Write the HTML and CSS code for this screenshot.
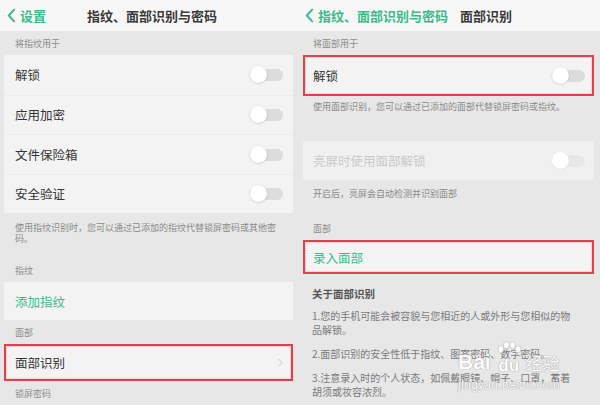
FILE: index.html
```html
<!DOCTYPE html>
<html lang="zh-CN">
<head>
<meta charset="utf-8">
<link rel="stylesheet" href="styles.css">
</head>
<body>
<div class="stage">
  <section class="screen screen-left">
    <header class="bar bar-centered">
      <span class="back"><svg class="chev-back" viewBox="0 0 10 16" width="9" height="15"><polyline points="8,1.5 2,8 8,14.5" fill="none" stroke="currentColor" stroke-width="2.2" stroke-linecap="round" stroke-linejoin="round"/></svg>设置</span>
      <span class="title">指纹、面部识别与密码</span>
      <span></span>
    </header>
    <div class="label">将指纹用于</div>
    <div class="card">
      <div class="row"><span>解锁</span><i class="switch"></i></div>
      <div class="row"><span>应用加密</span><i class="switch"></i></div>
      <div class="row"><span>文件保险箱</span><i class="switch"></i></div>
      <div class="row"><span>安全验证</span><i class="switch"></i></div>
    </div>
    <p class="note note-left">使用指纹识别时，您可以通过已添加的指纹代替锁屏密码或其他密码。</p>
    <div class="label">指纹</div>
    <div class="card">
      <div class="row row-single green">添加指纹</div>
    </div>
    <div class="label">面部</div>
    <div class="card marked">
      <div class="row row-face"><span>面部识别</span><svg class="chev-go" viewBox="0 0 6 10" width="5" height="9"><polyline points="1,1 5,5 1,9" fill="none" stroke="#c4c4c4" stroke-width="1.2"/></svg></div>
    </div>
    <div class="label">锁屏密码</div>
  </section>

  <section class="screen screen-right">
    <header class="bar bar-flow">
      <span class="back"><svg class="chev-back" viewBox="0 0 10 16" width="9" height="15"><polyline points="8,1.5 2,8 8,14.5" fill="none" stroke="currentColor" stroke-width="2.2" stroke-linecap="round" stroke-linejoin="round"/></svg>指纹、面部识别与密码</span>
      <span class="title">面部识别</span>
    </header>
    <div class="label">将面部用于</div>
    <div class="card marked">
      <div class="row row-unlock"><span>解锁</span><i class="switch"></i></div>
    </div>
    <p class="note note-r1">使用面部识别，您可以通过已添加的面部代替锁屏密码或指纹。</p>
    <div class="card card-dim">
      <div class="row row-dim"><span>亮屏时使用面部解锁</span><i class="switch switch-dim"></i></div>
    </div>
    <p class="note note-r2">开启后，亮屏会自动检测并识别面部</p>
    <div class="label">面部</div>
    <div class="card marked">
      <div class="row row-enroll green">录入面部</div>
    </div>
    <h3 class="about">关于面部识别</h3>
    <p class="para">1.您的手机可能会被容貌与您相近的人或外形与您相似的物品解锁。</p>
    <p class="para">2.面部识别的安全性低于指纹、图案密码、数字密码。</p>
    <p class="para">3.注意录入时的个人状态，如佩戴眼镜、帽子、口罩，蓄着胡须或妆容浓烈。</p>
  </section>

  <div class="watermark" aria-hidden="true">
    <div class="wm-top">
      <span class="wm-bai">Bai</span>
      <span class="wm-paw">
        <svg viewBox="0 0 30 22" width="28" height="20">
          <g fill="#ffffff" stroke="#bdbdbd" stroke-width="0.8">
            <ellipse cx="6" cy="9" rx="3.2" ry="4"/>
            <ellipse cx="12" cy="4.5" rx="3.2" ry="4"/>
            <ellipse cx="19" cy="4.5" rx="3.2" ry="4"/>
            <ellipse cx="25" cy="9" rx="3.2" ry="4"/>
          </g>
        </svg>
        <span class="wm-du">du</span>
      </span>
      <span class="wm-jy">经验</span>
    </div>
    <div class="wm-url">jingyan.baidu.com</div>
  </div>
</div>
</body>
</html>
```

FILE: styles.css
```css
* { box-sizing: border-box; }

html, body {
  margin: 0;
  padding: 0;
  background: #ffffff;
}

body {
  font-family: "Noto Sans CJK SC", "Noto Sans", "Liberation Sans", sans-serif;
  color: #333333;
}

.stage {
  position: relative;
  width: 600px;
  height: 405px;
  overflow: hidden;
  display: flex;
  gap: 3px;
  background: linear-gradient(#f7f7f7 0, #f7f7f7 31px, #e7e7e7 31px);
  padding-right: 3px;
}

.screen {
  width: 297px;
  height: 405px;
  background: #e7e7e7;
  display: flex;
  flex-direction: column;
  overflow: hidden;
}

.bar {
  height: 31px;
  flex: none;
  background: #f7f7f7;
  align-items: center;
  font-size: 13px;
}

.bar-centered {
  display: grid;
  grid-template-columns: 1fr auto 1fr;
  padding-left: 7px;
}

.bar-flow {
  display: flex;
  gap: 12px;
  padding-left: 5px;
}

.back {
  display: flex;
  align-items: center;
  gap: 4px;
  color: #3fb98c;
  font-size: 13px;
  font-weight: 700;
}

.chev-back { color: #3fb98c; flex: none; }

.title {
  color: #3a3a3a;
  font-weight: 700;
}

.label {
  flex: none;
  font-size: 9px;
  line-height: 12px;
  height: 24px;
  padding: 7px 15px 5px;
  color: #8c8c8c;
}

.screen-right .label { padding-left: 13px; }

.card {
  flex: none;
  background: #f3f3f3;
  margin: 0 4px;
}

.screen-right .card { margin: 0 3px 0 3px; }

.card.marked {
  outline: 2px solid #e3404e;
  outline-offset: -2px;
  box-shadow: inset 0 0 0 3px rgba(240, 150, 160, 0.35);
}

.row {
  height: 39.5px;
  display: flex;
  align-items: center;
  justify-content: space-between;
  padding: 0 9px 0 11px;
  font-size: 12.5px;
  color: #333333;
}

.row + .row { border-top: 1px solid #ececec; }

.row-single { height: 38px; }
.row-face { height: 37px; padding-right: 10px; }
.row-unlock { height: 41px; padding: 0 8px 0 10px; }
.row-dim { height: 39px; padding: 0 8px 0 10px; color: #c9c9c9; }
.row-enroll { height: 34px; padding-left: 10px; }

.card-dim { margin-top: 29px !important; background: #f0f0f0; }

.green { color: #3fb98c; }

.switch {
  width: 34px;
  height: 17px;
  position: relative;
  flex: none;
}

.switch::before {
  content: "";
  position: absolute;
  left: 6px;
  right: 1px;
  top: 3px;
  height: 12px;
  border-radius: 6px;
  background: #dcdcdc;
}

.switch::after {
  content: "";
  position: absolute;
  left: 0;
  top: 0;
  width: 17px;
  height: 17px;
  border-radius: 50%;
  background: #ffffff;
  box-shadow: 0 0.5px 2px rgba(0, 0, 0, 0.22);
}

.switch-dim::before { background: #e8e8e8; }
.switch-dim::after { box-shadow: 0 0.5px 1.5px rgba(0, 0, 0, 0.08); }

.note {
  margin: 0;
  flex: none;
  font-size: 9px;
  line-height: 11px;
  color: #8a8a8a;
}

.note-left { padding: 9px 16px 14px 15px; }
.note-r1 { padding: 5px 13px 0 13px; }
.note-r2 { padding: 8px 13px 17px 13px; }

.about {
  margin: 13px 0 0;
  padding-left: 12px;
  font-size: 10.5px;
  line-height: 14px;
  font-weight: 700;
  color: #555555;
}

.para {
  margin: 8px 0 0;
  padding: 0 20px 0 12px;
  font-size: 10px;
  line-height: 14px;
  color: #7a7a7a;
}

.para + .para { margin-top: 10px; }

.watermark {
  position: absolute;
  left: 458px;
  top: 339px;
  color: #ffffff;
  text-shadow: 0 0 1px #9a9a9a, 0 0 1px #9a9a9a;
  font-family: "Liberation Sans", "Noto Sans CJK SC", sans-serif;
  opacity: 0.92;
}

.wm-top {
  display: flex;
  align-items: flex-end;
  height: 34px;
}

.wm-bai { font-size: 21px; font-weight: 700; line-height: 22px; }

.wm-paw {
  display: flex;
  flex-direction: column;
  align-items: center;
  margin-left: 4px;
}

.wm-du { font-size: 17px; font-weight: 700; line-height: 14px; margin-top: -2px; }

.wm-jy {
  font-family: "Noto Sans CJK SC", sans-serif;
  font-size: 17px;
  line-height: 20px;
  margin-left: 3px;
}

.wm-url {
  font-size: 12px;
  line-height: 14px;
  margin-top: 5px;
  letter-spacing: 0.3px;
}
```
